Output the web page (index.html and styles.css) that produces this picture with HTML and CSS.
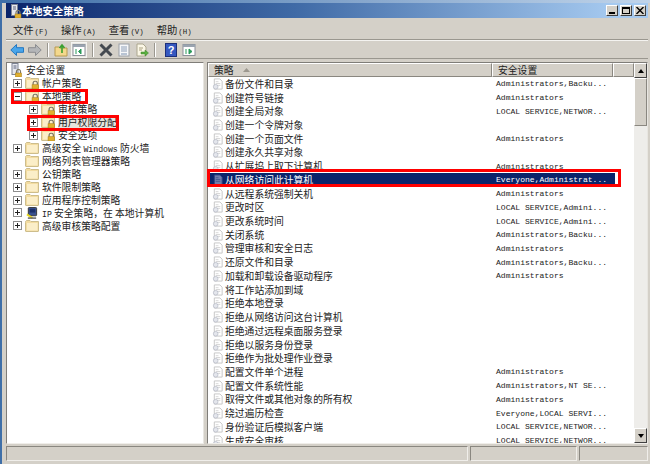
FILE: index.html
```html
<!DOCTYPE html>
<html lang="zh-CN">
<head>
<meta charset="utf-8">
<title>本地安全策略</title>
<link rel="stylesheet" href="styles.css">
</head>
<body>
<svg class="defs" width="0" height="0" aria-hidden="true">
  <symbol id="lock" viewBox="0 0 8 8"><path d="M2 4V2.500a2 2 0 0 1 4 0V4" fill="none" stroke="#7d7868" stroke-width="1.200"/><rect x="1" y="4" width="6" height="4" fill="#e0b030" stroke="#a47c14" stroke-width=".5"/></symbol>
  <symbol id="folder" viewBox="0 0 14 12"><path d="M.5 2.500V11a.5.5 0 0 0 .5.5h12a.5.5 0 0 0 .5-.5V1.500H6L5 .5H1.500L.5 1.500z" fill="#f3dca0" stroke="#cdbd8c"/><rect x="2" y="3" width="10.500" height="7.500" fill="#fbeec8"/></symbol>
  <symbol id="lockfolder" viewBox="0 0 14 12"><use href="#folder" width="14" height="12"/><use href="#lock" x="6" y="3.500" width="8.500" height="8.500"/></symbol>
  <symbol id="doc" viewBox="0 0 13 13"><path d="M2.500 1h6l2.500 2.500V12h-8.500z" fill="#fff" stroke="#c4c4c4"/><path d="M4 4h3M4 6h5M4 8h5" stroke="#d4d4d4"/><circle cx="4" cy="9.500" r="2.500" fill="#e4e6ec" stroke="#b6bac6" stroke-width=".8"/></symbol>
  <symbol id="docsel" viewBox="0 0 13 13"><path d="M2.500 1h6l2.500 2.500V12h-8.500z" fill="#6f7cab" stroke="#2a3f80"/><path d="M4 4h3M4 6h5M4 8h5" stroke="#46588f"/></symbol>
  <symbol id="plus" viewBox="0 0 9 9"><rect x=".5" y=".5" width="8" height="8" fill="#fff" stroke="#8e8e8e"/><path d="M2 4.500h5M4.500 2v5" stroke="#222"/></symbol>
  <symbol id="minus" viewBox="0 0 9 9"><rect x=".5" y=".5" width="8" height="8" fill="#fff" stroke="#8e8e8e"/><path d="M2 4.500h5" stroke="#222"/></symbol>
  <symbol id="server" viewBox="0 0 12 14"><rect x="1.500" y=".5" width="6" height="11" fill="#e6e8ee" stroke="#7d8494"/><path d="M3 3h3M3 5h3" stroke="#59617a"/><use href="#lock" x="4" y="6" width="8" height="8"/></symbol>
  <symbol id="ipsec" viewBox="0 0 13 13"><rect x="2.500" y=".5" width="9" height="9" rx="1" fill="#39518f" stroke="#333"/><rect x="4" y="2" width="6" height="4" fill="#1b2f6b"/><path d="M1 8l6 4" stroke="#e8d820" stroke-width="2"/><path d="M2 12h9" stroke="#555" stroke-width="1.500"/></symbol>
</svg>

<div class="window">
  <header class="titlebar">
    <svg class="title-icon"><use href="#server"/></svg>
    <span class="title-text">本地安全策略</span>
    <div class="win-buttons">
      <span class="wbtn"><i class="glyph-min"></i></span>
      <span class="wbtn"><i class="glyph-max"></i></span>
      <span class="wbtn">
        <svg width="8" height="7" viewBox="0 0 8 7"><path d="M.5 0l7 7M7.500 0l-7 7" stroke="#000" stroke-width="1.400"/></svg>
      </span>
    </div>
  </header>

  <nav class="menubar">
    <span>文件<small>(F)</small></span>
    <span>操作<small>(A)</small></span>
    <span>查看<small>(V)</small></span>
    <span>帮助<small>(H)</small></span>
  </nav>

  <div class="toolbar">
    <svg class="tool" viewBox="0 0 14 12"><path d="M6.500 .5L.8 6l5.700 5.500V8.300h7V3.700h-7z" fill="#4aa6ea" stroke="#2478c0"/></svg>
    <svg class="tool" viewBox="0 0 14 12"><path d="M7.500 .5L13.200 6l-5.700 5.500V8.300h-7V3.700h7z" fill="#b4b6b8" stroke="#8b8d90"/></svg>
    <i class="sep"></i>
    <svg class="tool" viewBox="0 0 14 14"><path d="M1 4h4l1 1h7v8H1z" fill="#f4d88c" stroke="#b89a50"/><path d="M8 10V3M5.500 5L8 2l2.500 3" fill="none" stroke="#3aa030" stroke-width="1.600"/></svg>
    <span class="tool-pressed"><svg class="tool" viewBox="0 0 14 14"><rect x="1" y="1.500" width="12" height="11" fill="#fff" stroke="#8b9099"/><rect x="1" y="1.500" width="12" height="2.500" fill="#9aa4b0"/><path d="M4 6v5M6.500 8.500L9 6v5z" fill="#2b9a5a" stroke="#2b9a5a"/></svg></span>
    <i class="sep"></i>
    <svg class="tool" viewBox="0 0 14 14"><path d="M1.500 1.500l11 11M12.500 1.500l-11 11" stroke="#454a50" stroke-width="3"/></svg>
    <svg class="tool" viewBox="0 0 14 14"><rect x="2" y="1" width="10" height="12" fill="#f6f7f9" stroke="#9aa0a8"/><path d="M4 4h6M4 6h6M4 8h6" stroke="#8fa0b8"/><rect x="4" y="10" width="6" height="2" fill="#b8c4d4"/></svg>
    <svg class="tool" viewBox="0 0 14 14"><path d="M2 1h6l3 3v9H2z" fill="#fbf7e6" stroke="#aca78f"/><path d="M4 5h4M4 7h3" stroke="#a89f80"/><path d="M6 9h4V7l3.500 3-3.500 3v-2H6z" fill="#5ab040" stroke="#3a8028" stroke-width=".5"/></svg>
    <i class="sep"></i>
    <svg class="tool tool-help" viewBox="0 0 14 14"><rect x="1.500" y=".5" width="11" height="13" fill="#3558c0" stroke="#1c2f7a"/><text x="7" y="11" text-anchor="middle" class="help-q">?</text></svg>
    <svg class="tool" viewBox="0 0 14 14"><rect x="1" y="1.500" width="12" height="11" fill="#fff" stroke="#8b9099"/><rect x="1" y="1.500" width="12" height="2.500" fill="#9aa4b0"/><path d="M4 6v5M7 6v5L10 8.500z" fill="#2b9a5a" stroke="#2b9a5a"/></svg>
  </div>

  <main class="panes">
    <aside class="tree">
      <div class="node"><svg class="ico ico-root"><use href="#server"/></svg><span>安全设置</span></div>
      <div class="node lv1"><svg class="exp"><use href="#plus"/></svg><svg class="ico"><use href="#lockfolder"/></svg><span>帐户策略</span></div>
      <div class="node lv1"><svg class="exp"><use href="#minus"/></svg><svg class="ico"><use href="#lockfolder"/></svg><span>本地策略</span></div>
      <div class="node lv2"><svg class="exp"><use href="#plus"/></svg><svg class="ico"><use href="#lockfolder"/></svg><span>审核策略</span></div>
      <div class="node lv2"><svg class="exp"><use href="#plus"/></svg><svg class="ico"><use href="#lockfolder"/></svg><span class="tree-current">用户权限分配</span></div>
      <div class="node lv2"><svg class="exp"><use href="#plus"/></svg><svg class="ico"><use href="#lockfolder"/></svg><span>安全选项</span></div>
      <div class="node lv1"><svg class="exp"><use href="#plus"/></svg><svg class="ico"><use href="#folder"/></svg><span>高级安全 <b class="lat">Windows</b> 防火墙</span></div>
      <div class="node lv1"><i class="exp-blank"></i><svg class="ico"><use href="#folder"/></svg><span>网络列表管理器策略</span></div>
      <div class="node lv1"><svg class="exp"><use href="#plus"/></svg><svg class="ico"><use href="#folder"/></svg><span>公钥策略</span></div>
      <div class="node lv1"><svg class="exp"><use href="#plus"/></svg><svg class="ico"><use href="#folder"/></svg><span>软件限制策略</span></div>
      <div class="node lv1"><svg class="exp"><use href="#plus"/></svg><svg class="ico"><use href="#folder"/></svg><span>应用程序控制策略</span></div>
      <div class="node lv1"><svg class="exp"><use href="#plus"/></svg><svg class="ico"><use href="#ipsec"/></svg><span><b class="lat">IP</b> 安全策略，在 本地计算机</span></div>
      <div class="node lv1"><svg class="exp"><use href="#plus"/></svg><svg class="ico"><use href="#folder"/></svg><span>高级审核策略配置</span></div>
    </aside>

    <section class="list">
      <div class="list-head">
        <div class="col col-name">策略<svg class="sort" width="7" height="4" viewBox="0 0 7 4"><path d="M3.500 0L7 4H0z" fill="#9c988f"/></svg></div>
        <div class="col col-value">安全设置</div>
        <div class="col col-rest"></div>
      </div>
      <div class="list-body">
        <div class="row"><svg class="doc"><use href="#doc"/></svg><span class="name">备份文件和目录</span><span class="value">Administrators,Backu...</span></div>
        <div class="row"><svg class="doc"><use href="#doc"/></svg><span class="name">创建符号链接</span><span class="value">Administrators</span></div>
        <div class="row"><svg class="doc"><use href="#doc"/></svg><span class="name">创建全局对象</span><span class="value">LOCAL SERVICE,NETWOR...</span></div>
        <div class="row"><svg class="doc"><use href="#doc"/></svg><span class="name">创建一个令牌对象</span><span class="value"></span></div>
        <div class="row"><svg class="doc"><use href="#doc"/></svg><span class="name">创建一个页面文件</span><span class="value">Administrators</span></div>
        <div class="row"><svg class="doc"><use href="#doc"/></svg><span class="name">创建永久共享对象</span><span class="value"></span></div>
        <div class="row"><svg class="doc"><use href="#doc"/></svg><span class="name">从扩展坞上取下计算机</span><span class="value">Administrators</span></div>
        <div class="row row-selected"><svg class="doc"><use href="#docsel"/></svg><span class="name">从网络访问此计算机</span><span class="value">Everyone,Administrat...</span></div>
        <div class="row"><svg class="doc"><use href="#doc"/></svg><span class="name">从远程系统强制关机</span><span class="value">Administrators</span></div>
        <div class="row"><svg class="doc"><use href="#doc"/></svg><span class="name">更改时区</span><span class="value">LOCAL SERVICE,Admini...</span></div>
        <div class="row"><svg class="doc"><use href="#doc"/></svg><span class="name">更改系统时间</span><span class="value">LOCAL SERVICE,Admini...</span></div>
        <div class="row"><svg class="doc"><use href="#doc"/></svg><span class="name">关闭系统</span><span class="value">Administrators,Backu...</span></div>
        <div class="row"><svg class="doc"><use href="#doc"/></svg><span class="name">管理审核和安全日志</span><span class="value">Administrators</span></div>
        <div class="row"><svg class="doc"><use href="#doc"/></svg><span class="name">还原文件和目录</span><span class="value">Administrators,Backu...</span></div>
        <div class="row"><svg class="doc"><use href="#doc"/></svg><span class="name">加载和卸载设备驱动程序</span><span class="value">Administrators</span></div>
        <div class="row"><svg class="doc"><use href="#doc"/></svg><span class="name">将工作站添加到域</span><span class="value"></span></div>
        <div class="row"><svg class="doc"><use href="#doc"/></svg><span class="name">拒绝本地登录</span><span class="value"></span></div>
        <div class="row"><svg class="doc"><use href="#doc"/></svg><span class="name">拒绝从网络访问这台计算机</span><span class="value"></span></div>
        <div class="row"><svg class="doc"><use href="#doc"/></svg><span class="name">拒绝通过远程桌面服务登录</span><span class="value"></span></div>
        <div class="row"><svg class="doc"><use href="#doc"/></svg><span class="name">拒绝以服务身份登录</span><span class="value"></span></div>
        <div class="row"><svg class="doc"><use href="#doc"/></svg><span class="name">拒绝作为批处理作业登录</span><span class="value"></span></div>
        <div class="row"><svg class="doc"><use href="#doc"/></svg><span class="name">配置文件单个进程</span><span class="value">Administrators</span></div>
        <div class="row"><svg class="doc"><use href="#doc"/></svg><span class="name">配置文件系统性能</span><span class="value">Administrators,NT SE...</span></div>
        <div class="row"><svg class="doc"><use href="#doc"/></svg><span class="name">取得文件或其他对象的所有权</span><span class="value">Administrators</span></div>
        <div class="row"><svg class="doc"><use href="#doc"/></svg><span class="name">绕过遍历检查</span><span class="value">Everyone,LOCAL SERVI...</span></div>
        <div class="row"><svg class="doc"><use href="#doc"/></svg><span class="name">身份验证后模拟客户端</span><span class="value">LOCAL SERVICE,NETWOR...</span></div>
        <div class="row"><svg class="doc"><use href="#doc"/></svg><span class="name">生成安全审核</span><span class="value">LOCAL SERVICE,NETWOR...</span></div>
      </div>
      <div class="scrollbar">
        <span class="sb-btn"><i class="tri-up"></i></span>
        <span class="sb-thumb"></span>
        <span class="sb-track"></span>
        <span class="sb-btn"><i class="tri-down"></i></span>
      </div>
    </section>
  </main>

  <footer class="statusbar">
    <span class="st st-main"></span>
    <span class="st st-b"></span>
    <span class="st st-c"></span>
  </footer>
</div>

<div class="mark mark-local"></div>
<div class="mark mark-rights"></div>
<div class="mark mark-row"></div>
</body>
</html>
```

FILE: styles.css
```css
* { box-sizing: border-box; }
html, body { margin: 0; height: 100%; }
body {
  position: relative;
  width: 650px;
  height: 464px;
  overflow: hidden;
  font-family: "Noto Sans CJK SC", "Liberation Sans", sans-serif;
  font-size: 9.8px;
  color: #222;
  background: #d4d0c8;
}
.defs { position: absolute; }
.lat { font-family: "Liberation Mono", monospace; font-weight: 400; font-size: 8.2px; }

.window {
  height: 464px;
  display: flex;
  flex-direction: column;
  padding: 3px 2px 3px 4px;
  border-left: 2px solid #3f6fa8;
  background: linear-gradient(90deg, #3f6fa8, #c0d4ea) top / 100% 3px no-repeat, #d4d0c8;
}

.titlebar {
  height: 15px;
  margin-bottom: 1px;
  padding: 0 2px 0 4px;
  flex: none;
  display: flex;
  align-items: center;
  color: #fff;
  background: linear-gradient(90deg, #0a246a 0%, #3f6aa6 45%, #a6caf0 95%);
}
.title-icon { width: 12px; height: 14px; flex: none; }
.title-text { font-size: 10.3px; font-weight: 700; }
.win-buttons { margin-left: auto; display: flex; gap: 2px; }
.wbtn {
  width: 12px;
  height: 11px;
  display: flex;
  align-items: center;
  justify-content: center;
  background: #d4d0c8;
  border: 1px solid;
  border-color: #fff #404040 #404040 #fff;
}
.glyph-min { width: 6px; height: 2px; margin-top: 5px; background: #000; }
.glyph-max { width: 8px; height: 7px; border: 1px solid #000; border-top-width: 2px; }

.menubar {
  height: 21px;
  flex: none;
  display: flex;
  align-items: center;
  gap: 13px;
  padding: 0 7px;
  border-bottom: 1px solid #9a978f;
  font-size: 10.3px;
}
.menubar small { font-family: "Liberation Mono", monospace; font-size: 7.4px; margin-left: 1px; }

.toolbar {
  height: 19px;
  flex: none;
  display: flex;
  align-items: center;
  gap: 4px;
  padding: 1px 4px 0;
  border-top: 1px solid #f4f3f0;
  border-bottom: 1px solid #9a978f;
}
.tool { width: 14px; height: 14px; flex: none; }
.tool-help { margin-left: 3px; }
.tool-pressed { width: 16px; height: 16px; margin-left: -1px; display: flex; align-items: center; justify-content: center; background: #e8e6e1; border: 1px solid #f5f4f1; flex: none; }
.sep { width: 2px; height: 14px; margin: 0 1px; background: #9a978f; border-right: 1px solid #fff; flex: none; }
.help-q { font: 700 11px "Liberation Sans", sans-serif; fill: #fff; }

.panes {
  flex: 1;
  min-height: 0;
  display: flex;
  gap: 3px;
  margin-top: 3px;
}

.tree {
  width: 198px;
  flex: none;
  padding: 1px 0 0 3px;
  background: #fff;
  border: 1px solid;
  border-color: #7f7d78 #e8e6e1 #f0eeea #7f7d78;
}
.node { height: 12.96px; display: flex; align-items: center; white-space: nowrap; }
.lv1 { padding-left: 3px; }
.lv2 { padding-left: 19px; }
.exp { width: 9px; height: 9px; flex: none; margin-right: 3px; }
.exp-blank { width: 9px; flex: none; margin-right: 3px; }
.ico { width: 14px; height: 12px; flex: none; margin-right: 3px; }
.ico-root { width: 13px; height: 14px; }
.tree-current { background: #e6e4de; }

.list {
  flex: 1;
  min-width: 0;
  display: grid;
  grid-template-columns: 1fr 13px;
  grid-template-rows: 14px 1fr;
  overflow: hidden;
  border: 1px solid;
  border-color: #7f7d78 #e8e6e1 #f0eeea #7f7d78;
  background: #fff;
}
.list-head { display: flex; grid-column: 1; grid-row: 1; background: #d4d0c8; }
.col {
  height: 14px;
  padding-left: 5px;
  display: flex;
  align-items: center;
  border: 1px solid;
  border-color: #fff #8a8780 #8a8780 #fff;
}
.col-name { width: 284px; }
.col-value { width: 121px; }
.col-rest { flex: 1; }
.sort { margin-left: 9px; }
.list-body { grid-column: 1; grid-row: 2; overflow: hidden; padding-left: 4px; }
.row { height: 13.73px; display: flex; align-items: center; white-space: nowrap; }
.doc { width: 12px; height: 12px; flex: none; margin-right: 1px; }
.name { width: 271px; flex: none; }
.value { font-family: "Liberation Mono", monospace; font-size: 8.05px; }
.row-selected { width: 406px; margin-left: -3px; padding-left: 3px; background: #0a246a; color: #fff; }

.scrollbar {
  grid-column: 2;
  grid-row: 1 / span 2;
  display: flex;
  flex-direction: column;
  background: #eeedea;
}
.sb-btn {
  height: 15px;
  flex: none;
  display: flex;
  align-items: center;
  justify-content: center;
  background: #d4d0c8;
  border: 1px solid;
  border-color: #fff #404040 #404040 #fff;
}
.sb-thumb { height: 48px; flex: none; background: #d4d0c8; border: 1px solid; border-color: #fff #8a8780 #8a8780 #fff; }
.sb-track { flex: 1; }
.tri-up { width: 0; height: 0; border: 3px solid transparent; border-top-width: 0; border-bottom: 4px solid #000; }
.tri-down { width: 0; height: 0; border: 3px solid transparent; border-bottom-width: 0; border-top: 4px solid #000; }

.statusbar {
  height: 15px;
  flex: none;
  display: flex;
  gap: 2px;
  margin-top: 2px;
}
.st { border: 1px solid; border-color: #8a8780 #f0eeea #f0eeea #8a8780; }
.st-main { flex: 1; }
.st-b { width: 107px; }
.st-c { width: 69px; }

.mark { position: absolute; border: 3px solid #f00; }
.mark-local { left: 11px; top: 89px; width: 77px; height: 15px; }
.mark-rights { left: 27px; top: 115px; width: 92px; height: 16px; }
.mark-row { left: 207px; top: 169px; width: 414px; height: 18px; }
```
